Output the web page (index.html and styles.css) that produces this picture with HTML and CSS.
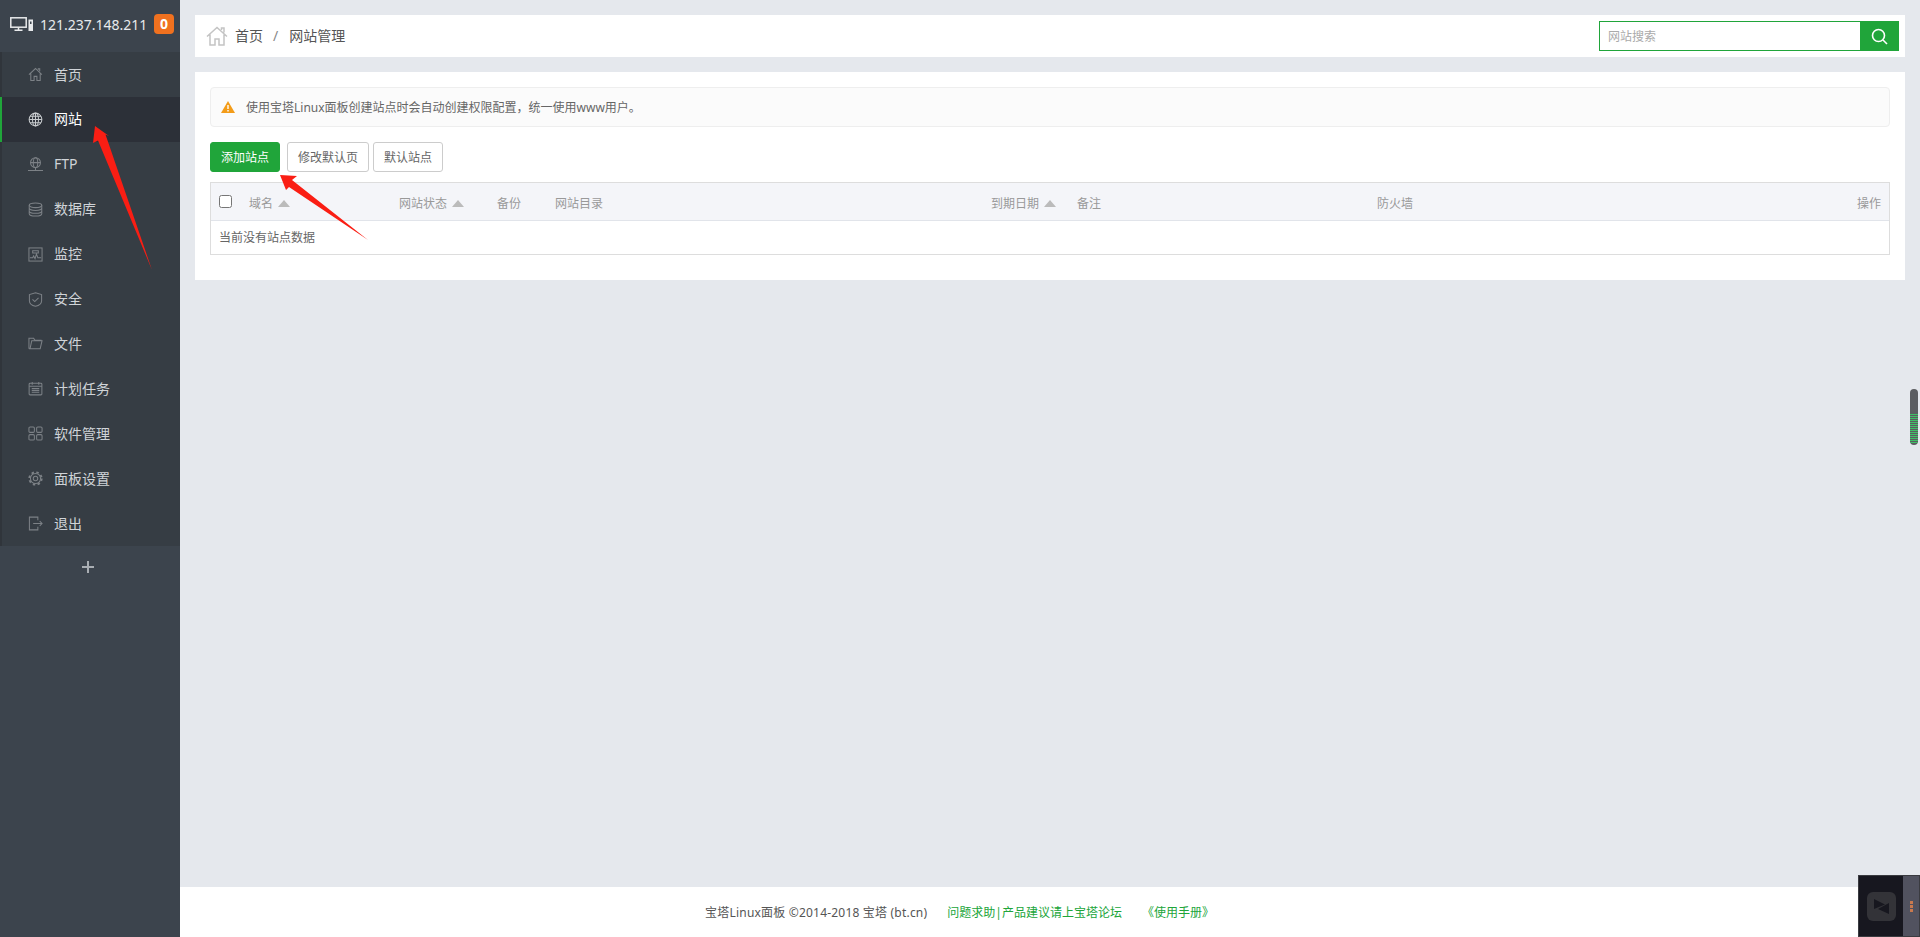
FILE: index.html
```html
<!DOCTYPE html>
<html>
<head>
  <meta charset="utf-8">
  <title>网站管理</title>
  <link rel="stylesheet" href="styles.css">
</head>
<body>
  <aside class="sidebar">
    <div class="server">
      <svg class="server-icon" viewBox="0 0 23 14" fill="none" stroke="#e8eaec" stroke-width="1.500">
        <rect x=".8" y=".8" width="15.400" height="9.400"/>
        <path d="M4.500 13.200h8M8.500 10.500v2.500"/>
        <rect x="18.500" y="2.500" width="4.500" height="11.500" fill="#e8eaec" stroke="none"/>
        <rect x="20" y="4.500" width="1.500" height="2.500" fill="#3c444d" stroke="none"/>
      </svg>
      <span class="server-ip">121.237.148.211</span>
      <span class="badge">0</span>
    </div>
    <ul class="menu">
      <li class="menu-item">
        <svg class="menu-icon" viewBox="0 0 16 16"><path d="M1 8.200 8 1.600l6.800 6.600M3 7v7.500h3.500V10h3v4.500H13V7M11 3V1.800h1.500v2.700"/></svg>
        <span class="menu-text">首页</span>
      </li>
      <li class="menu-item active">
        <svg class="menu-icon" viewBox="0 0 16 16"><circle cx="8" cy="8" r="6.800"/><ellipse cx="8" cy="8" rx="3.200" ry="6.800"/><path d="M8 1.200v13.600M1.200 8h13.600M2.200 4.600h11.600M2.200 11.400h11.600"/></svg>
        <span class="menu-text">网站</span>
      </li>
      <li class="menu-item">
        <svg class="menu-icon" viewBox="0 0 16 16"><circle cx="8" cy="6" r="5.300"/><ellipse cx="8" cy="6" rx="2.400" ry="5.300"/><path d="M2.700 6h10.600M8 11.500v2.500M0 14.500h16"/></svg>
        <span class="menu-text">FTP</span>
      </li>
      <li class="menu-item">
        <svg class="menu-icon" viewBox="0 0 16 16"><ellipse cx="8" cy="3.500" rx="6.700" ry="2.500"/><path d="M1.300 3.500v9c0 1.400 3 2.500 6.700 2.500s6.700-1.100 6.700-2.500v-9M1.300 6.500c0 1.400 3 2.500 6.700 2.500s6.700-1.100 6.700-2.500M1.300 9.500c0 1.400 3 2.500 6.700 2.500s6.700-1.100 6.700-2.500"/></svg>
        <span class="menu-text">数据库</span>
      </li>
      <li class="menu-item">
        <svg class="menu-icon" viewBox="0 0 16 16"><rect x="1" y="1" width="14" height="14"/><path d="M2 11.500h3l1-2 1.500 3 1.500-5 1.500 4h3.500M5 4h6v2.500H5z"/></svg>
        <span class="menu-text">监控</span>
      </li>
      <li class="menu-item">
        <svg class="menu-icon" viewBox="0 0 16 16"><path d="M8 .8l6.500 2v6.400c0 3-3 5.200-6.500 6-3.500-.8-6.500-3-6.500-6V2.800zM4.800 7.800l2.400 2.400 4-4"/></svg>
        <span class="menu-text">安全</span>
      </li>
      <li class="menu-item">
        <svg class="menu-icon" viewBox="0 0 16 16"><path d="M1 13.500V2.500h5l1.500 2h7M1 13.500h12l2-8.500H4l-1.800 8.500"/></svg>
        <span class="menu-text">文件</span>
      </li>
      <li class="menu-item">
        <svg class="menu-icon" viewBox="0 0 16 16"><rect x="1.200" y="2.500" width="13.600" height="12.300" rx="1"/><path d="M4.500 1v3M11.500 1v3M1.200 5.500h13.600M4 8h8M4 10h8M4 12h8"/></svg>
        <span class="menu-text">计划任务</span>
      </li>
      <li class="menu-item">
        <svg class="menu-icon" viewBox="0 0 16 16"><rect x="1" y="1" width="5.800" height="5.800" rx="1.200"/><rect x="9.200" y="1" width="5.800" height="5.800" rx="1.200"/><rect x="1" y="9.200" width="5.800" height="5.800" rx="1.200"/><rect x="9.200" y="9.200" width="5.800" height="5.800" rx="1.200"/></svg>
        <span class="menu-text">软件管理</span>
      </li>
      <li class="menu-item">
        <svg class="menu-icon" viewBox="0 0 16 16"><circle cx="8" cy="8" r="5.400"/><circle cx="8" cy="8" r="2.400"/><circle class="gear-teeth" cx="8" cy="8" r="6.600"/></svg>
        <span class="menu-text">面板设置</span>
      </li>
      <li class="menu-item">
        <svg class="menu-icon" viewBox="0 0 16 16"><path d="M10.500 4.500V1.200h-9v13.600h9v-3.300M5.500 8h9.500M12.500 5.500 15 8l-2.500 2.500"/></svg>
        <span class="menu-text">退出</span>
      </li>
    </ul>
    <div class="menu-add">
      <svg class="add-icon" viewBox="0 0 14 14"><path d="M7 1v12M1 7h12"/></svg>
    </div>
  </aside>

  <div class="main">
    <div class="content">
      <div class="topbar">
        <div class="crumbs">
          <svg class="crumb-home" viewBox="0 0 22 20"><path d="M1 10.500 11 1.500l10 9M4 8.500V19h5v-6h4v6h5V8.500M15.500 4V2h2.500v4.500"/></svg>
          <span class="crumb-link">首页</span>
          <span class="crumb-sep">/</span>
          <span class="crumb-link">网站管理</span>
        </div>
        <div class="search">
          <input class="search-input" type="text" placeholder="网站搜索">
          <button class="search-btn">
            <svg class="search-icon" viewBox="0 0 17 17"><circle cx="7.500" cy="7.500" r="6"/><path d="M12 12l4 4"/></svg>
          </button>
        </div>
      </div>

      <div class="panel">
        <div class="notice">
          <svg class="notice-icon" viewBox="0 0 14 12"><path d="M7 0l7 12H0z" fill="#f39c19"/><path d="M6.300 4h1.400v4H6.300zM6.300 9h1.400v1.500H6.300z" fill="#fff"/></svg>
          使用宝塔Linux面板创建站点时会自动创建权限配置，统一使用www用户。
        </div>
        <div class="actions">
          <button class="btn btn-green">添加站点</button>
          <button class="btn">修改默认页</button>
          <button class="btn btn-last">默认站点</button>
        </div>
        <table class="sites">
          <thead>
            <tr>
              <th class="col-check"><input type="checkbox"></th>
              <th class="col-name">域名<i class="sort"></i></th>
              <th class="col-status">网站状态<i class="sort"></i></th>
              <th class="col-backup">备份</th>
              <th class="col-path">网站目录</th>
              <th class="col-date">到期日期<i class="sort"></i></th>
              <th class="col-note">备注</th>
              <th class="col-fire">防火墙</th>
              <th class="col-op">操作</th>
            </tr>
          </thead>
          <tbody>
            <tr>
              <td colspan="9">当前没有站点数据</td>
            </tr>
          </tbody>
        </table>
      </div>
    </div>

    <div class="footer">
      <span class="footer-copy">宝塔Linux面板 ©2014-2018 宝塔 (bt.cn)</span>
      <a href="#">问题求助|产品建议请上宝塔论坛</a>
      <a href="#">《使用手册》</a>
    </div>
  </div>

  <!-- red arrows drawn on top of the screenshot -->
  <svg class="arrows" width="1920" height="937" viewBox="0 0 1920 937">
    <path d="M95 126 109 136 105.500 134.500 152 270 98 140.500 93 143z" fill="#fa1e14"/>
    <path d="M280 175 297 176 292 180 368 240 289 187 286 190z" fill="#fa1e14"/>
  </svg>

  <div class="meter"><div class="meter-fill"></div></div>

  <div class="widget">
    <div class="widget-box">
      <svg class="widget-logo" viewBox="0 0 29 29">
        <rect width="29" height="29" rx="6" fill="#333338"/>
        <path d="M7 7l11 5.500L7 17zM22 11v11l-11-5z" fill="#17171f"/>
      </svg>
    </div>
    <div class="widget-side">
      <i></i><i></i><i></i>
    </div>
  </div>
</body>
</html>
```

FILE: styles.css
```css
* {
  box-sizing: border-box;
}

body {
  margin: 0;
  height: 937px;
  overflow: hidden;
  display: flex;
  background-color: #e5e8ed;
  font-family: "Noto Sans", "Noto Sans CJK SC", sans-serif;
  font-size: 12px;
  color: #666;
}

/* sidebar */
.sidebar {
  width: 180px;
  flex-shrink: 0;
  background-color: #3c444d;
}

.server {
  height: 52px;
  display: flex;
  align-items: center;
  padding: 0 0 4px 10px;
  color: #e8eaec;
}

.server-icon {
  width: 23px;
  height: 14px;
}

.server-ip {
  margin-left: 7px;
  font-size: 14px;
  width: 114px;
}

.badge {
  width: 20px;
  height: 20px;
  line-height: 20px;
  text-align: center;
  background-color: #f0711f;
  border-radius: 4px;
  color: #fff;
  font-size: 14px;
  font-weight: bold;
}

.menu {
  list-style: none;
  margin: 0;
  padding: 0;
  background-color: #363d44;
}

.menu-item {
  height: 45px;
  margin-bottom: -0.100px;
  display: flex;
  align-items: center;
  padding-left: 26px;
  border-left: 2px solid #30353b;
  font-size: 14px;
  color: #d0d4d8;
}

.menu-item.active {
  background-color: #2c3038;
  border-left-color: #20a53a;
  color: #fff;
}

.menu-icon {
  width: 15px;
  height: 15px;
  margin-right: 11px;
  fill: none;
  stroke: #7c8186;
  stroke-width: 1.100;
}

.active .menu-icon {
  stroke: #c8cbce;
}

.gear-teeth {
  stroke-width: 2;
  stroke-dasharray: 2.600 2.600;
}

.menu-text {
  margin-bottom: 2px;
}

.menu-add {
  height: 42px;
  display: flex;
  align-items: center;
  justify-content: center;
  padding-right: 5px;
  padding-top: 1px;
}

.add-icon {
  width: 14px;
  height: 14px;
  stroke: #a9aeb3;
  stroke-width: 2;
}

/* main column */
.main {
  flex: 1;
  display: flex;
  flex-direction: column;
}

.content {
  flex: 1;
  padding: 15px;
}

.topbar {
  height: 42px;
  display: flex;
  align-items: center;
  justify-content: space-between;
  padding: 0 6px 0 11px;
  background-color: #fff;
}

.crumbs {
  display: flex;
  align-items: center;
  font-size: 14px;
  color: #555;
}

.crumb-home {
  width: 22px;
  height: 20px;
  margin-right: 7px;
  fill: none;
  stroke: #c4c4c4;
  stroke-width: 1.500;
}

.crumb-link,
.crumb-sep {
  margin-bottom: 2px;
}

.crumb-sep {
  margin-left: 10px;
  margin-right: 11px;
  color: #888;
}

.search {
  display: flex;
  width: 300px;
  height: 30px;
}

.search-input {
  flex: 1;
  min-width: 0;
  padding: 0 8px;
  border: 1px solid #20a53a;
  border-right: none;
  border-radius: 0;
  outline: none;
  font-family: inherit;
  font-size: 12px;
}

.search-input::placeholder {
  color: #aaa;
}

.search-btn {
  width: 39px;
  border: none;
  padding: 0;
  background-color: #20a53a;
  display: flex;
  align-items: center;
  justify-content: center;
}

.search-icon {
  width: 17px;
  height: 17px;
  fill: none;
  stroke: #fff;
  stroke-width: 1.600;
}

.panel {
  margin-top: 15px;
  padding: 15px;
  height: 208px;
  background-color: #fff;
}

.notice {
  height: 40px;
  display: flex;
  align-items: center;
  padding-left: 10px;
  background-color: #fbfbfb;
  border: 1px solid #eee;
  border-radius: 4px;
}

.notice-icon {
  width: 14px;
  height: 12px;
  margin-right: 11px;
}

.actions {
  display: flex;
  margin-top: 15px;
}

.btn {
  height: 30px;
  padding: 0 10px;
  margin-right: 4px;
  background-color: #fff;
  border: 1px solid #ccc;
  border-radius: 3px;
  font-family: inherit;
  font-size: 12px;
  color: #666;
}

.btn-green {
  margin-right: 7px;
  background-color: #20a53a;
  border-color: #20a53a;
  color: #fff;
}

.sites {
  width: 100%;
  margin-top: 10px;
  table-layout: fixed;
  border-collapse: separate;
  border-spacing: 0;
  border: 1px solid #ddd;
}

.sites th {
  height: 38px;
  padding: 2px 8px 0;
  text-align: left;
  font-weight: normal;
  color: #999;
  background-color: #f4f5f9;
  border-bottom: 1px solid #e1e4ea;
}

.sites td {
  height: 33px;
  padding: 0 8px 2px;
}

.col-check { width: 30px; }
.col-name { width: 150px; }
.col-status { width: 98px; }
.col-backup { width: 58px; }
.col-path { width: 436px; }
.col-date { width: 86px; }
.col-note { width: 300px; }
.col-fire { width: 410px; }
.col-op { width: 110px; }

.sites th.col-op {
  text-align: right;
}

.sites th.col-check {
  padding-top: 0;
}

.col-check input {
  display: block;
  width: 13px;
  height: 13px;
  margin: 0;
}

.sort {
  display: inline-block;
  margin-left: 5px;
  border-left: 6px solid transparent;
  border-right: 6px solid transparent;
  border-bottom: 7px solid #bbb;
  vertical-align: 1px;
}

/* footer */
.footer {
  height: 50px;
  display: flex;
  align-items: center;
  justify-content: center;
  gap: 20px;
  padding-right: 181px;
  background-color: #fff;
  color: #555;
}

.footer-copy {
  letter-spacing: .2px;
}

.footer a {
  color: #20a53a;
  text-decoration: none;
}

/* overlays */
.arrows {
  position: absolute;
  left: 0;
  top: 0;
  pointer-events: none;
}

.meter {
  position: absolute;
  left: 1910px;
  top: 389px;
  width: 8px;
  height: 56px;
  padding-top: 25px;
  background-color: #5b5d61;
  border-radius: 4px;
  overflow: hidden;
}

.meter-fill {
  height: 29px;
  background: repeating-linear-gradient(#3fbf66 0, #3fbf66 1px, #5b5d61 1px, #5b5d61 2px);
}

.widget {
  position: absolute;
  right: 0;
  bottom: 0;
  width: 62px;
  height: 62px;
  display: flex;
  border: 1px solid #3a3b40;
}

.widget-box {
  flex: 1;
  display: flex;
  align-items: center;
  justify-content: center;
  background-color: #17171f;
}

.widget-logo {
  width: 29px;
  height: 29px;
}

.widget-side {
  width: 16px;
  display: flex;
  flex-direction: column;
  align-items: center;
  justify-content: center;
  gap: 1px;
  background-color: #51525f;
}

.widget-side i {
  width: 3px;
  height: 3px;
  background-color: #c8794f;
}
```
